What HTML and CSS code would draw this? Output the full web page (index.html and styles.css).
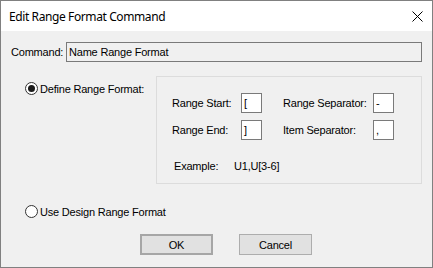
FILE: index.html
```
<!DOCTYPE html>
<html lang="en">
<head>
    <title>Edit Range Format Command</title>
    <link rel="stylesheet" href="styles.css">
</head>
<body>
    <div class="window">
        <div class="titlebar">
            <span class="title">Edit Range Format Command</span>
            <svg class="close" width="11" height="11" viewBox="0 0 11 11">
                <path d="M0.5 0.5 L10.5 10.5 M10.5 0.5 L0.5 10.5" stroke="#000" stroke-width="1"/>
            </svg>
        </div>
        <div class="content">
            <div class="cmd-row">
                <span class="cmd-label">Command:</span>
                <div class="cmd-box">Name Range Format</div>
            </div>

            <div class="define-row">
                <div class="radio-opt"><span class="radio checked"></span>Define Range Format:</div>
                <div class="group">
                    <div class="fields">
                        <span>Range Start:</span><span class="box">[</span>
                        <span>Range Separator:</span><span class="box">-</span>
                        <span>Range End:</span><span class="box">]</span>
                        <span>Item Separator:</span><span class="box">,</span>
                    </div>
                    <div class="example">
                        <span class="example-label">Example:</span><span>U1,U[3-6]</span>
                    </div>
                </div>
            </div>

            <div class="radio-opt use-design"><span class="radio"></span>Use Design Range Format</div>

            <div class="buttons">
                <button class="btn default">OK</button>
                <button class="btn">Cancel</button>
            </div>
        </div>
    </div>
</body>
</html>
```
FILE: styles.css
```
body {
    margin: 0;
    font-family: "Liberation Sans", Arial, sans-serif;
    font-size: 11px;
    letter-spacing: -0.2px;
    color: #000;
}
.window {
    width: 433px;
    height: 268px;
    box-sizing: border-box;
    border: 1px solid #808080;
    display: flex;
    flex-direction: column;
}
.titlebar {
    height: 30px;
    background: white;
    display: flex;
    align-items: center;
    padding-left: 8px;
}
.title {
    font-family: "Noto Sans", sans-serif;
    font-size: 12px;
    letter-spacing: -0.4px;
    flex: 1;
}
.close {
    margin-right: 9px;
}
.content {
    flex: 1;
    background: #f0f0f0;
}
.cmd-row {
    display: flex;
    align-items: center;
    margin-top: 11px;
    padding-left: 10px;
}
.cmd-label {
    width: 55px;
}
.cmd-box {
    width: 356px;
    height: 20px;
    box-sizing: border-box;
    border: 1px solid #7a7a7a;
    padding-left: 2px;
    line-height: 18px;
}
.define-row {
    display: flex;
    margin-top: 14px;
}
.radio-opt {
    display: flex;
    align-items: center;
    padding-left: 24px;
    height: 13px;
}
.define-row .radio-opt {
    margin-top: 6px;
}
.radio {
    width: 13px;
    height: 13px;
    box-sizing: border-box;
    border: 1px solid #333;
    border-radius: 50%;
    margin-right: 2px;
    background: #fff;
    display: flex;
    align-items: center;
    justify-content: center;
}
.radio.checked::after {
    content: "";
    width: 7px;
    height: 7px;
    border-radius: 50%;
    background: #1a1a1a;
}
.group {
    margin-left: auto;
    margin-right: 10px;
    width: 266px;
    height: 108px;
    box-sizing: border-box;
    border: 1px solid #dcdcdc;
    padding: 16px 0 0 15px;
}
.fields {
    display: grid;
    grid-template-columns: 69px 42px 90px 21px;
    grid-auto-rows: 20px;
    row-gap: 7px;
    align-items: center;
}
.box {
    width: 21px;
    height: 20px;
    box-sizing: border-box;
    border: 1px solid #7a7a7a;
    background: white;
    padding-left: 2px;
    line-height: 18px;
}
.example {
    margin-top: 20px;
    padding-left: 2px;
    display: flex;
}
.example-label {
    width: 60px;
}
.use-design {
    margin-top: 21px;
}
.buttons {
    display: flex;
    gap: 26px;
    margin-top: 16px;
    padding-left: 139px;
}
.btn {
    width: 73px;
    height: 21px;
    box-sizing: border-box;
    background: #e1e1e1;
    border: 1px solid #adadad;
    font-family: "Liberation Sans", Arial, sans-serif;
    font-size: 11px;
    letter-spacing: -0.2px;
    color: #000;
    padding: 0;
}
.btn.default {
    border: 2px solid #a6a6a6;
}
```
